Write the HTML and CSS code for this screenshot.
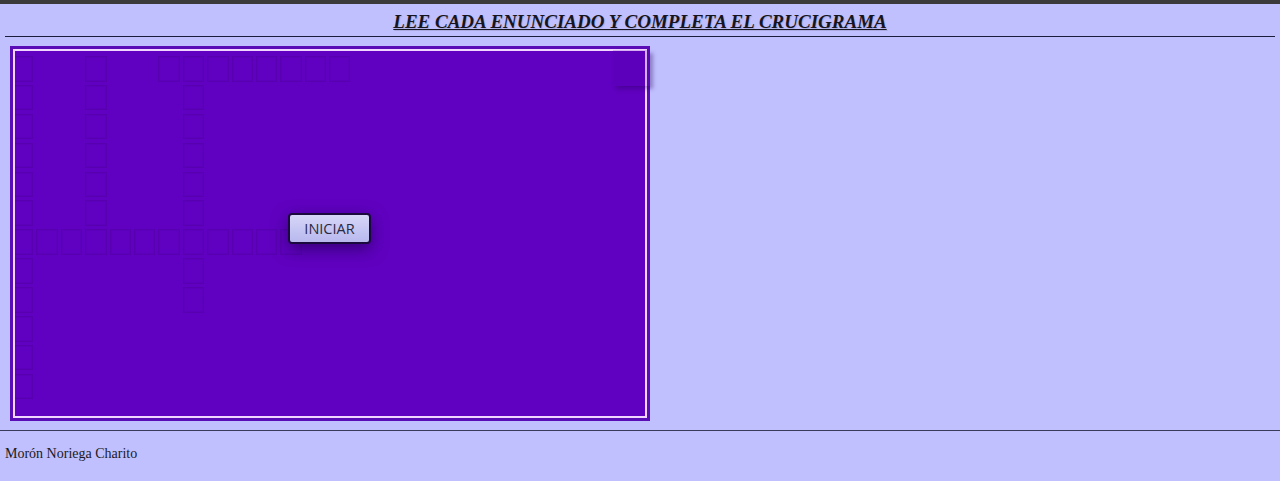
FILE: index.html
```html
<!DOCTYPE html>
<html lang="es">
<head>
<meta charset="utf-8">
<title>Crucigrama</title>
<link rel="stylesheet" href="styles.css">
</head>
<body>
<div class="topbar"></div>
<header class="header">
  <h1 class="title">LEE CADA ENUNCIADO Y COMPLETA EL CRUCIGRAMA</h1>
</header>
<main class="main">
  <div class="board">
    <div class="frame">
      <div class="cells">
        <div class="grid">
          <!-- row 0 -->
          <div class="c"></div><div class="e"></div><div class="e"></div><div class="c"></div><div class="e"></div><div class="e"></div><div class="c"></div><div class="c"></div><div class="c"></div><div class="c"></div><div class="c"></div><div class="c"></div><div class="c"></div><div class="c"></div>
          <!-- row 1 -->
          <div class="c"></div><div class="e"></div><div class="e"></div><div class="c"></div><div class="e"></div><div class="e"></div><div class="e"></div><div class="c"></div><div class="e"></div><div class="e"></div><div class="e"></div><div class="e"></div><div class="e"></div><div class="e"></div>
          <!-- row 2 -->
          <div class="c"></div><div class="e"></div><div class="e"></div><div class="c"></div><div class="e"></div><div class="e"></div><div class="e"></div><div class="c"></div><div class="e"></div><div class="e"></div><div class="e"></div><div class="e"></div><div class="e"></div><div class="e"></div>
          <!-- row 3 -->
          <div class="c"></div><div class="e"></div><div class="e"></div><div class="c"></div><div class="e"></div><div class="e"></div><div class="e"></div><div class="c"></div><div class="e"></div><div class="e"></div><div class="e"></div><div class="e"></div><div class="e"></div><div class="e"></div>
          <!-- row 4 -->
          <div class="c"></div><div class="e"></div><div class="e"></div><div class="c"></div><div class="e"></div><div class="e"></div><div class="e"></div><div class="c"></div><div class="e"></div><div class="e"></div><div class="e"></div><div class="e"></div><div class="e"></div><div class="e"></div>
          <!-- row 5 -->
          <div class="c"></div><div class="e"></div><div class="e"></div><div class="c"></div><div class="e"></div><div class="e"></div><div class="e"></div><div class="c"></div><div class="e"></div><div class="e"></div><div class="e"></div><div class="e"></div><div class="e"></div><div class="e"></div>
          <!-- row 6 -->
          <div class="c"></div><div class="c"></div><div class="c"></div><div class="c"></div><div class="c"></div><div class="c"></div><div class="c"></div><div class="c"></div><div class="c"></div><div class="c"></div><div class="c"></div><div class="c"></div><div class="e"></div><div class="e"></div>
          <!-- row 7 -->
          <div class="c"></div><div class="e"></div><div class="e"></div><div class="e"></div><div class="e"></div><div class="e"></div><div class="e"></div><div class="c"></div><div class="e"></div><div class="e"></div><div class="e"></div><div class="e"></div><div class="e"></div><div class="e"></div>
          <!-- row 8 -->
          <div class="c"></div><div class="e"></div><div class="e"></div><div class="e"></div><div class="e"></div><div class="e"></div><div class="e"></div><div class="c"></div><div class="e"></div><div class="e"></div><div class="e"></div><div class="e"></div><div class="e"></div><div class="e"></div>
          <!-- row 9 -->
          <div class="c"></div><div class="e"></div><div class="e"></div><div class="e"></div><div class="e"></div><div class="e"></div><div class="e"></div><div class="e"></div><div class="e"></div><div class="e"></div><div class="e"></div><div class="e"></div><div class="e"></div><div class="e"></div>
          <!-- row 10 -->
          <div class="c"></div><div class="e"></div><div class="e"></div><div class="e"></div><div class="e"></div><div class="e"></div><div class="e"></div><div class="e"></div><div class="e"></div><div class="e"></div><div class="e"></div><div class="e"></div><div class="e"></div><div class="e"></div>
          <!-- row 11 -->
          <div class="c"></div><div class="e"></div><div class="e"></div><div class="e"></div><div class="e"></div><div class="e"></div><div class="e"></div><div class="e"></div><div class="e"></div><div class="e"></div><div class="e"></div><div class="e"></div><div class="e"></div><div class="e"></div>
        </div>
      </div>
      <div class="clue"></div>
      <button class="start" type="button">INICIAR</button>
    </div>
  </div>
</main>
<footer class="footer">Morón Noriega Charito</footer>
</body>
</html>
```

FILE: styles.css
```css
html, body {
  margin: 0;
  padding: 0;
}

body {
  background: #c0c0ff;
  font-family: "Liberation Serif", "Times New Roman", serif;
  color: #111;
  height: 481px;
  overflow: hidden;
}

.topbar {
  height: 4px;
  background: #3b3b3b;
}

.header {
  margin: 0 5px;
  border-bottom: 1px solid #1c1c3c;
  padding: 8px 0 4px;
}

.title {
  margin: 0;
  text-align: center;
  font-size: 19px;
  line-height: 20px;
  font-weight: bold;
  font-style: italic;
  text-decoration: underline;
  color: #151520;
  text-shadow: 1px 1px 1px rgba(0, 0, 0, 0.12);
}

.main {
  padding: 9px 0 0 10px;
}

.board {
  width: 634px;
  height: 369px;
  border: 3px solid #5a0cb6;
}

.frame {
  position: relative;
  height: 100%;
  box-sizing: border-box;
  border: 2px solid #f3d6ff;
  background: #6000c0;
}

.cells {
  height: 100%;
  overflow: hidden;
}

.grid {
  display: grid;
  grid-template-columns: repeat(14, 21.4px);
  grid-template-rows: repeat(12, 25.5px);
  column-gap: 3px;
  row-gap: 3.4px;
  margin: 5px 0 0 -3px;
}

.c {
  border: 1px solid rgba(60, 0, 120, 0.22);
  box-shadow: inset 0 0 0 1px rgba(80, 0, 170, 0.2);
}

.clue {
  position: absolute;
  top: -1px;
  right: -5px;
  width: 37px;
  height: 36px;
  background: rgba(85, 0, 170, 0.18);
  box-shadow: 3px 3px 4px rgba(40, 0, 90, 0.35);
}

.start {
  position: absolute;
  left: 273px;
  top: 162px;
  width: 83px;
  height: 31px;
  padding: 0;
  border: 2px solid #1b0a3e;
  border-radius: 4px;
  background: linear-gradient(#d6d6f8, #b8b8ee);
  color: #2a2a40;
  font-family: "Open Sans", "Noto Sans", sans-serif;
  font-size: 14.5px;
  box-shadow: 0 5px 16px rgba(20, 0, 60, 0.55);
  cursor: pointer;
}

.footer {
  margin-top: 9px;
  border-top: 1px solid #3a3a5a;
  padding: 15px 5px 13px;
  font-size: 14px;
  color: #1a1a22;
}
```
